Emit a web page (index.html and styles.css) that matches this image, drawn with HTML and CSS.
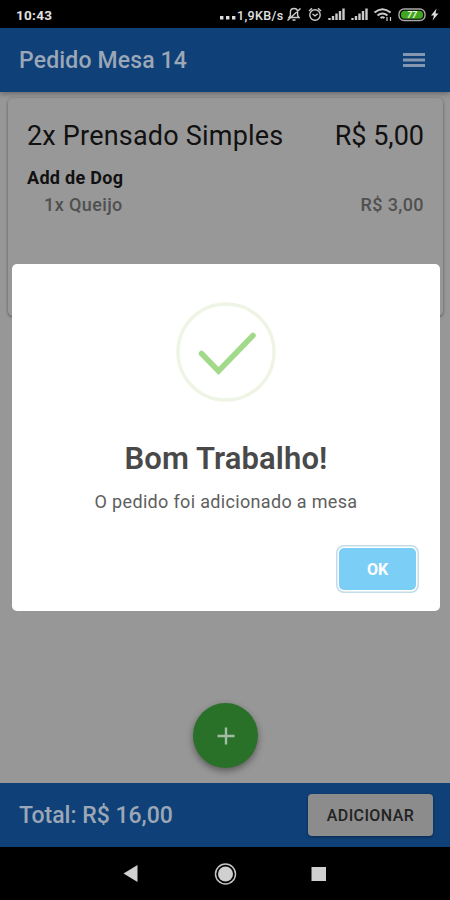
FILE: index.html
```html
<!DOCTYPE html>
<html lang="pt-BR">
<head>
<meta charset="utf-8">
<title>Pedido Mesa 14</title>
<link rel="stylesheet" href="styles.css">
</head>
<body>
<div class="phone">
  <div class="status">
    <span class="clock">10:43</span>
    <div class="status-right">
      <svg class="dots" width="16" height="4" viewBox="0 0 16 4" fill="#ddd"><path d="M0 0h3.4v3.4H0zM6 0h3.4v3.4H6zM12 0h3.4v3.4H12z"/></svg>
      <span class="speed">1,9KB/s</span>
      <svg class="status-icons" width="156" height="20" viewBox="285 5 156 20" fill="none" stroke="#ccc" stroke-width="1.4">
        <path d="M289 17.5h10l-1.4-2v-3.2c0-5-7.2-5-7.2 0v3.2zM292.5 20h3M287.5 20.5l13-12"/>
        <circle cx="315" cy="15" r="5.2"/><path d="M309 11l3-2.7M321 11l-3-2.7M312.5 14l2.5 1.8 2.8-2"/>
        <g stroke-width="2.4"><path d="M329.500 20v-2M333 20v-4M336.500 20v-6.500M340 20v-9M343.500 20V8.500M352.500 20v-2M356 20v-4M359.500 20v-6.500M363 20v-9M366.500 20V8.500"/></g>
        <g stroke-width="2"><path d="M374.500 12.500q8-6.500 16 0M377.500 15.500q5-4 10 0M380.500 18q2-1.600 4 0"/></g>
        <path d="M387 17v4M390.500 17v4" stroke-width="1.200"/>
        <rect x="399" y="9" width="26" height="11.500" rx="5" stroke="#aaa"/><rect x="401" y="10.700" width="22" height="8" rx="3.500" fill="#41a51e" stroke="none"/>
        <text x="412" y="18" text-anchor="middle" class="battery-level">77</text>
        <path d="M436.500 8.500l-5.500 7h3l-1.500 5 6-7h-3z" fill="#ddd" stroke="none"/>
      </svg>
    </div>
  </div>
  <header class="header">
    <h1 class="title">Pedido Mesa 14</h1>
    <svg class="menu" width="22" height="16" viewBox="0 0 22 16" fill="#8596b0"><path d="M0 1h22v3H0zM0 6.500h22v3H0zM0 12h22v3H0z"/></svg>
  </header>
  <main class="content">
    <section class="card">
      <div class="row item"><span class="item-name">2x Prensado Simples</span><span class="item-price">R$ 5,00</span></div>
      <div class="group">Add de Dog</div>
      <div class="row extra"><span>1x Queijo</span><span>R$ 3,00</span></div>
    </section>
    <button class="fab" aria-label="Novo item"><svg width="18" height="18" viewBox="0 0 18 18" stroke="#a3bca4" stroke-width="2.400"><path d="M9 .5v17M.5 9h17"/></svg></button>
  </main>
  <footer class="footer">
    <span class="total">Total: R$ 16,00</span>
    <button class="add">ADICIONAR</button>
  </footer>
  <nav class="nav">
    <svg width="450" height="53" viewBox="0 0 450 53" fill="#d0d0d0">
      <path d="M123.500 26.500l14-8.500v17z"/>
      <circle cx="225.500" cy="27" r="10" fill="none" stroke="#c4c4c4" stroke-width="1.500"/><circle cx="225.500" cy="27" r="7.500"/>
      <path d="M311.500 20h14.500v14h-14.500z"/>
    </svg>
  </nav>
  <div class="modal" role="dialog">
    <svg class="success" width="102" height="102" viewBox="0 0 102 102" fill="none">
      <circle cx="51" cy="51" r="48" stroke="#eff5e5" stroke-width="3.500"/>
      <path d="M26.500 52.500L43.500 70 78 34.500" stroke="#a3d98a" stroke-width="5.500" stroke-linecap="round"/>
    </svg>
    <h2 class="modal-title">Bom Trabalho!</h2>
    <p class="modal-text">O pedido foi adicionado a mesa</p>
    <button class="ok">OK</button>
  </div>
</div>
</body>
</html>
```
FILE: styles.css
```css
* { box-sizing: border-box; }
body { margin: 0; font-family: Roboto, sans-serif; }
h1, h2, p { margin: 0; }
button { border: 0; padding: 0; font-family: inherit; }
.phone { position: relative; width: 450px; height: 900px; display: flex; flex-direction: column; overflow: hidden; background: #979797; }
.status { height: 28px; flex: none; background: #000; display: flex; justify-content: space-between; align-items: center; padding: 2px 9px 0 16px; color: #e2e2e2; }
.clock { font-size: 13.5px; font-weight: 700; letter-spacing: .3px; }
.status-right { display: flex; align-items: center; }
.dots { margin: 6px 1px 0 0; }
.speed { width: 48px; font-size: 12.5px; font-weight: 500; letter-spacing: .35px; white-space: nowrap; }
.status-icons { margin-top: -1px; }
.battery-level { font: italic 700 9px Roboto, sans-serif; fill: #e5f5df; stroke: none; }
.header { height: 64px; flex: none; display: flex; align-items: center; justify-content: space-between; padding: 0 25px 0 19px; background: #0f4078; box-shadow: 0 2px 5px rgba(0,0,0,.3); z-index: 1; }
.title, .total { color: #9ba7b6; font-size: 23px; font-weight: 500; white-space: nowrap; }
.title { letter-spacing: .15px; }
.content { flex: 1; display: flex; flex-direction: column; align-items: center; justify-content: space-between; padding: 6px 7px 15px 8px; }
.card { width: 100%; height: 218px; padding: 19px 19px 0; border-radius: 5px; background: #989898; box-shadow: 0 1px 3px rgba(0,0,0,.45); }
.row { display: flex; justify-content: space-between; white-space: nowrap; }
.item { color: #111; font-size: 27px; line-height: 38px; }
.item-name { letter-spacing: .2px; }
.group { margin-top: 10px; color: #111; font-size: 18px; font-weight: 700; line-height: 26px; letter-spacing: .3px; }
.extra { padding-left: 17px; color: #505050; font-size: 18px; font-weight: 500; line-height: 28px; letter-spacing: .4px; }
.fab { width: 65px; height: 65px; display: grid; place-items: center; border-radius: 50%; background: #297129; box-shadow: 0 3px 7px rgba(0,0,0,.4); }
.footer { height: 64px; flex: none; display: flex; align-items: center; justify-content: space-between; padding: 0 17px 0 19px; background: #0f4078; }
.add { width: 125px; height: 42px; border-radius: 4px; background: #8c8c8c; color: #222; font-size: 16px; font-weight: 500; letter-spacing: .4px; box-shadow: 0 1px 3px rgba(0,0,0,.4); }
.nav { height: 53px; flex: none; background: #000; }
.nav svg { display: block; }
.modal { position: absolute; z-index: 2; left: 12px; top: 264px; width: 428px; height: 347px; padding-top: 37px; display: flex; flex-direction: column; align-items: center; border-radius: 5px; background: #fff; }
.modal-title { margin-top: 37px; color: #494949; font-size: 31px; font-weight: 600; line-height: 38px; letter-spacing: .1px; }
.modal-text { margin-top: 12px; color: #5e5e5e; font-size: 18px; line-height: 24px; letter-spacing: .33px; white-space: nowrap; }
.ok { align-self: flex-end; margin: 34px 24px 0 0; width: 77px; height: 42px; border-radius: 5px; background: #7bcff6; color: #fff; font-size: 16px; font-weight: 700; box-shadow: 0 0 0 1.5px #fff, 0 0 0 3px #c3dce9; }
```
